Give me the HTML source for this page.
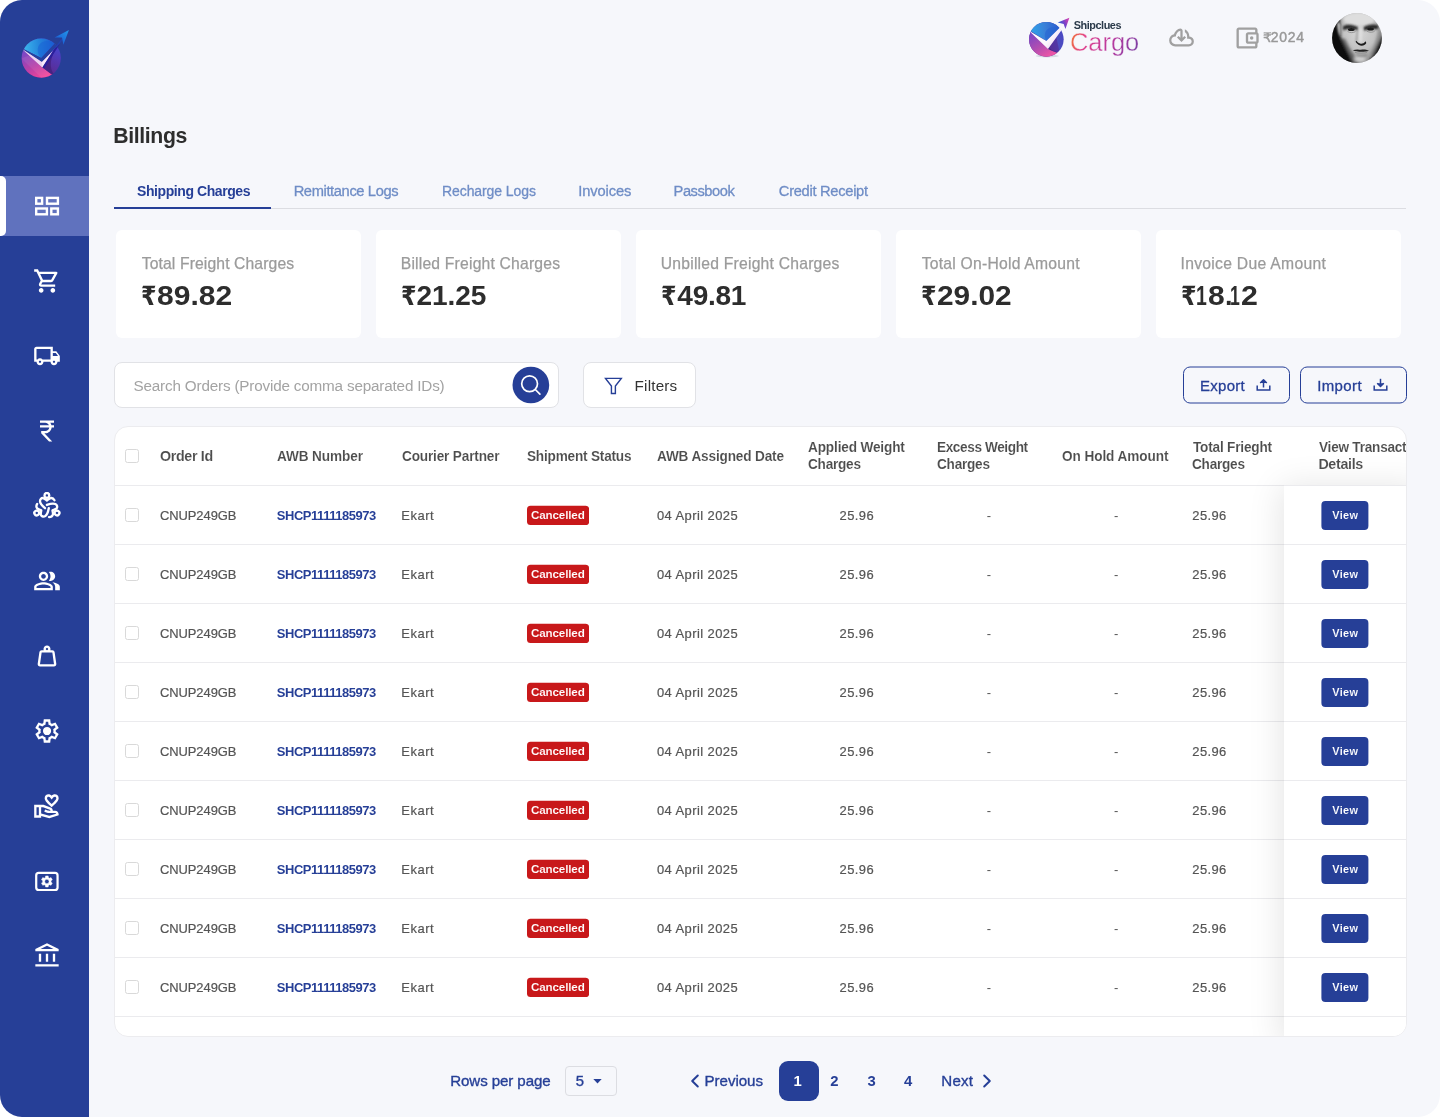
<!DOCTYPE html>
<html lang="en"><head><meta charset="utf-8"><title>Billings</title>
<style>
*{box-sizing:border-box}
html,body{margin:0;padding:0;background:#fff}
body{width:1440px;height:1117px;overflow:hidden;font-family:"Liberation Sans","DejaVu Sans",sans-serif}
#app{will-change:transform;position:relative;width:1440px;height:1117px;background:#f6f7fb;border-radius:22px;overflow:hidden}
#side{position:absolute;left:0;top:0;width:89px;height:1117px;background:#263f97}
#act{position:absolute;left:0;top:176px;width:89px;height:60px;background:#6072be}
#actbar{position:absolute;left:0;top:176px;width:6px;height:60px;background:#fff;border-radius:0 5px 5px 0}
.ic{position:absolute;left:33px;width:28px;height:28px;fill:#fff}
.t{position:absolute;white-space:pre;line-height:1}
.card{position:absolute;top:230px;width:245px;height:108px;background:#fff;border-radius:6px}
.abs{position:absolute}
#tabline{position:absolute;left:114px;top:208px;width:1292px;height:1px;background:#dcdde2}
#tabact{position:absolute;left:114px;top:207px;width:157px;height:2px;background:#263f97}
#search{position:absolute;left:114px;top:362px;width:445px;height:46px;background:#fff;border:1px solid #e1e2e6;border-radius:8px}
#sbtn{position:absolute;left:512.5px;top:366.7px;width:36.6px;height:36.6px;border-radius:50%;background:#263f97}
#filt{position:absolute;left:583px;top:362px;width:113px;height:46px;background:#fff;border:1px solid #e1e2e6;border-radius:8px}
.obtn{position:absolute;top:366.5px;width:107px;height:37px;border:1px solid #263f97;border-radius:7px}
#tbl{position:absolute;left:114px;top:426px;width:1293px;height:611px;background:#fff;border:1px solid #ececef;border-radius:14px;overflow:hidden}
.rl{position:absolute;left:0;width:1293px;height:1px;background:#ebebee}
.cb{position:absolute;left:125px;width:14px;height:14px;border:1px solid #d9d9d9;border-radius:2.5px;background:#fff}
.badge{position:absolute;left:527px;width:62px;height:19.4px;border-radius:3.5px;background:#c8181a}
.vbtn{position:absolute;left:1321.6px;width:47px;height:29px;border-radius:4px;background:#263f97}
#sel{position:absolute;left:565px;top:1066px;width:52px;height:30px;border:1px solid #dcdde2;border-radius:4px}
#pg1{position:absolute;left:779px;top:1061px;width:40px;height:40px;border-radius:9px;background:#263f97}
.clipr{clip-path:inset(-5px 0 -5px 0)}
</style></head>
<body><div id="app">
<div id="side"></div><div id="act"></div><div id="actbar"></div>
<svg class="ic" style="top:192.3px" viewBox="0 0 28 28" ><rect x="3.20" y="5.90" width="5.90" height="5.80" fill="none" stroke="#fff" stroke-width="2.4"/><rect x="14.00" y="5.90" width="10.90" height="5.80" fill="none" stroke="#fff" stroke-width="2.4"/><rect x="3.20" y="16.50" width="10.70" height="5.80" fill="none" stroke="#fff" stroke-width="2.4"/><rect x="18.30" y="16.50" width="6.60" height="5.80" fill="none" stroke="#fff" stroke-width="2.4"/></svg>
<svg class="ic" style="top:267.3px" viewBox="0 -960 960 960" ><path d="M280-80q-33 0-56.500-23.500T200-160q0-33 23.500-56.500T280-240q33 0 56.500 23.500T360-160q0 33-23.500 56.500T280-80Zm400 0q-33 0-56.500-23.500T600-160q0-33 23.500-56.500T680-240q33 0 56.500 23.500T760-160q0 33-23.500 56.500T680-80ZM246-720l96 200h280l110-200H246Zm-38-80h590q23 0 35 20.500t1 41.500L692-482q-11 20-29.500 31T622-440H324l-44 80h480v80H280q-45 0-68-39.500t-2-78.500l54-98-144-304H40v-80h130l38 80Z"/></svg>
<svg class="ic" style="top:342.3px" viewBox="0 0 24 24" ><path d="M20 8h-3V4H3c-1.100 0-2 .9-2 2v11h2c0 1.660 1.340 3 3 3s3-1.340 3-3h6c0 1.660 1.340 3 3 3s3-1.340 3-3h2v-5l-3-4zm-.5 1.500l1.960 2.500H17V9.500h2.500zM6 18c-.55 0-1-.45-1-1s.45-1 1-1 1 .45 1 1-.45 1-1 1zm2.220-3c-.55-.61-1.330-1-2.220-1s-1.670.39-2.220 1H3V6h12v9H8.220zM18 18c-.55 0-1-.45-1-1s.45-1 1-1 1 .45 1 1-.45 1-1 1z"/></svg>
<svg class="ic" style="top:417.3px" viewBox="0 0 24 24" ><path d="M13.660 7c-.56-1.180-1.760-2-3.160-2H6V3h12v2h-3.260c.48.580.84 1.260 1.050 2H18v2h-2.020c-.25 2.800-2.610 5-5.480 5h-.73l6.730 7h-2.770L7 14v-2h3.500c1.760 0 3.220-1.300 3.460-3H6V7h7.660z"/></svg>
<svg class="ic" style="top:492.3px" viewBox="0 0 24 24" ><g transform="translate(0 -0.3)" fill="none" stroke="#fff" stroke-width="2" stroke-linecap="round" stroke-linejoin="round"><circle cx="11.9" cy="3.2" r="2.050"/><path d="M18.400 7.400C17.600 5.900 16.400 5.300 15.200 5.500 13.900 5.700 13 6.900 11.900 7.700 10.800 6.900 9.900 5.700 8.600 5.500 7 5.300 5.900 6.700 6 8.300 6.200 10.500 8.300 12.500 10.300 14.200"/><g transform="rotate(120 11.9 13.25)"><circle cx="11.9" cy="3.2" r="2.050"/><path d="M18.400 7.400C17.600 5.900 16.400 5.300 15.200 5.500 13.900 5.700 13 6.900 11.900 7.700 10.800 6.900 9.900 5.700 8.600 5.500 7 5.300 5.900 6.700 6 8.300 6.200 10.500 8.300 12.500 10.300 14.200"/></g><g transform="rotate(240 11.9 13.25)"><circle cx="11.9" cy="3.2" r="2.050"/><path d="M18.400 7.400C17.600 5.900 16.400 5.300 15.200 5.500 13.900 5.700 13 6.900 11.900 7.700 10.800 6.900 9.900 5.700 8.600 5.500 7 5.300 5.900 6.700 6 8.300 6.200 10.500 8.300 12.500 10.300 14.200"/></g></g></svg>
<svg class="ic" style="top:567.3px" viewBox="0 0 24 24" ><path d="M16.670 13.130C18.040 14.060 19 15.320 19 17v3h4v-3c0-2.180-3.570-3.470-6.330-3.870zM15 12c2.210 0 4-1.790 4-4s-1.790-4-4-4c-.47 0-.91.100-1.330.24C14.500 5.270 15 6.580 15 8s-.5 2.730-1.330 3.760c.42.140.86.240 1.330.240zM9 12c2.210 0 4-1.790 4-4s-1.790-4-4-4-4 1.790-4 4 1.790 4 4 4zm0-6c1.100 0 2 .9 2 2s-.9 2-2 2-2-.9-2-2 .9-2 2-2zm0 7c-2.670 0-8 1.340-8 4v3h16v-3c0-2.660-5.330-4-8-4zm6 5H3v-.99C3.200 16.290 6.300 15 9 15s5.800 1.290 6 2v1z"/></svg>
<svg class="ic" style="top:642.3px" viewBox="0 -960 960 960" ><path d="M240-200h480l-57-400H297l-57 400Zm240-480q17 0 28.500-11.500T520-720q0-17-11.500-28.500T480-760q-17 0-28.500 11.500T440-720q0 17 11.500 28.500T480-680Zm113 0h70q30 0 52 20t27 49l57 400q5 36-18.500 63.500T720-120H240q-37 0-60.500-27.500T161-211l57-400q5-29 27-49t52-20h70q-3-10-5-19.500t-2-20.500q0-50 35-85t85-35q50 0 85 35t35 85q0 11-2 20.500t-5 19.500Z"/></svg>
<svg class="ic" style="top:717.3px" viewBox="0 -960 960 960" ><path d="m370-80-16-128q-13-5-24.500-12T307-235l-119 50L78-375l103-78q-1-7-1-13.500v-27q0-6.500 1-13.500L78-585l110-190 119 50q11-8 23-15t24-12l16-128h220l16 128q13 5 24.500 12t22.500 15l119-50 110 190-103 78q1 7 1 13.500v27q0 6.500-2 13.500l103 78-110 190-118-50q-11 8-23 15t-24 12L590-80H370Zm70-80h79l14-106q31-8 57.500-23.500T639-327l99 41 39-68-86-65q5-14 7-29.500t2-31.500q0-16-2-31.500t-7-29.500l86-65-39-68-99 42q-22-23-48.500-38.500T533-694l-13-106h-79l-14 106q-31 8-57.500 23.500T321-633l-99-41-39 68 86 64q-5 15-7 30t-2 32q0 16 2 31t7 30l-86 65 39 68 99-42q22 23 48.500 38.500T427-266l13 106Zm42-180q58 0 99-41t41-99q0-58-41-99t-99-41q-59 0-99.500 41T342-480q0 58 40.500 99t99.500 41Z"/></svg>
<svg class="ic" style="top:792.3px" viewBox="0 0 24 24" ><path d="M16 13c3.090-2.810 6-5.440 6-7.700C22 3.450 20.550 2 18.700 2c-1.040 0-2.050.49-2.700 1.250C15.340 2.490 14.340 2 13.300 2 11.450 2 10 3.450 10 5.300c0 2.260 2.910 4.890 6 7.700zm-2.700-9c.44 0 .89.210 1.180.55L16 6.340l1.520-1.790c.29-.34.740-.55 1.180-.55.740 0 1.300.56 1.300 1.300 0 1.120-2.040 3.170-4 4.990-1.960-1.820-4-3.880-4-4.990 0-.74.56-1.300 1.300-1.300zM19 16h-2c0-1.200-.75-2.280-1.870-2.700L8.970 11H1v11h6v-1.440l7 1.940 8-2.500v-1c0-1.660-1.340-3-3-3zM3 20v-7h2v7H3zm10.970.41L7 18.480V13h1.610l5.820 2.170c.34.130.57.460.57.830 0 0-1.990-.05-2.300-.15l-2.380-.79-.63 1.900 2.380.79c.51.170 1.040.26 1.580.26H19c.39 0 .74.230.9.560l-5.930 1.840z"/></svg>
<svg class="ic" style="top:867.3px" viewBox="0 0 24 24" ><rect x="2.750" y="5.050" width="18.300" height="14.650" rx="2.200" fill="none" stroke="#fff" stroke-width="1.9"/><path fill-rule="evenodd" d="M10.63 9.03 L10.79 7.68 L13.01 7.68 L13.17 9.03 L14.18 9.62 L15.44 9.08 L16.54 11.00 L15.45 11.81 L15.45 12.99 L16.54 13.80 L15.44 15.72 L14.18 15.18 L13.17 15.77 L13.01 17.12 L10.79 17.12 L10.63 15.77 L9.62 15.18 L8.36 15.72 L7.26 13.80 L8.35 12.99 L8.35 11.81 L7.26 11.00 L8.36 9.08 L9.62 9.62Z M10.00 12.40a1.9 1.9 0 1 0 3.8 0a1.9 1.9 0 1 0 -3.8 0Z" stroke="#fff" stroke-width="0.400" stroke-linejoin="round"/></svg>
<svg class="ic" style="top:942.3px" viewBox="0 -960 960 960" ><path d="M200-280v-280h80v280h-80Zm240 0v-280h80v280h-80ZM80-120v-80h800v80H80Zm600-160v-280h80v280h-80ZM80-640v-80l400-200 400 200v80H80Zm178-80h444L480-830 258-720Z"/></svg>
<svg class="abs" style="left:16px;top:24px" width="60" height="60" viewBox="0 0 1117 1117"><defs>
<clipPath id="L1c"><circle cx="470" cy="635" r="365"/></clipPath>
<linearGradient id="L1p" gradientUnits="userSpaceOnUse" x1="200" y1="500" x2="480" y2="1000"><stop offset="0" stop-color="#7a48c6"/><stop offset=".55" stop-color="#b840a8"/><stop offset="1" stop-color="#f0459a"/></linearGradient>
<linearGradient id="L1b" gradientUnits="userSpaceOnUse" x1="150" y1="450" x2="720" y2="420"><stop offset="0" stop-color="#3bb4ec"/><stop offset=".5" stop-color="#2486dc"/><stop offset="1" stop-color="#1c58cf"/></linearGradient>
<linearGradient id="L1r" gradientUnits="userSpaceOnUse" x1="560" y1="900" x2="800" y2="450"><stop offset="0" stop-color="#5a2a8e"/><stop offset=".6" stop-color="#5238b4"/><stop offset="1" stop-color="#4644cc"/></linearGradient>
<linearGradient id="L1a" gradientUnits="userSpaceOnUse" x1="980" y1="120" x2="760" y2="360"><stop offset="0" stop-color="#2298ea"/><stop offset="1" stop-color="#1a55d2"/></linearGradient>
</defs>
<g clip-path="url(#L1c)">
<rect x="0" y="0" width="1117" height="1117" fill="url(#L1r)"/>
<path d="M0 300L492 808C550 850 600 890 690 950L690 1117L0 1117Z" fill="url(#L1p)"/>
<path d="M100 640L520 1050L700 1000L300 560Z" fill="#fff" opacity=".07"/>
<path d="M492 808L760 420C640 640 600 800 720 960L690 960C600 890 550 850 492 808Z" fill="#42207c" opacity=".75"/>
<path d="M60 425L470 635L780 300L780 0L0 0Z" fill="url(#L1b)"/>
<path d="M470 635C380 560 380 400 480 340C560 300 680 310 740 350Z" fill="#1a63d6" opacity=".55"/>
<path d="M60 425L470 635L760 320L830 330L480 708L100 470Z" fill="#2441a0"/>
<path d="M120 470L480 708L690 500L492 812Z" fill="#f7eafa"/>
<path d="M120 470L480 708L492 812Z" fill="#e6bfe9" opacity=".55"/>
</g>
<path d="M492 812L690 500L790 365L810 380L530 826Z" fill="#2b1f9c"/>
<path d="M700 470L850 270L880 285L770 420Z" fill="#2343ae"/>
<path d="M985 112L718 252L856 250L882 388Z" fill="url(#L1a)"/></svg>
<svg class="abs" style="left:1024px;top:10px" width="52" height="52" viewBox="0 0 1117 1117"><defs>
<clipPath id="L2c"><circle cx="480" cy="630" r="372"/></clipPath>
<linearGradient id="L2p" gradientUnits="userSpaceOnUse" x1="200" y1="500" x2="520" y2="1000"><stop offset="0" stop-color="#7d47c4"/><stop offset=".55" stop-color="#b44eb0"/><stop offset="1" stop-color="#ec55a6"/></linearGradient>
<linearGradient id="L2b" gradientUnits="userSpaceOnUse" x1="170" y1="450" x2="740" y2="420"><stop offset="0" stop-color="#2fa0e8"/><stop offset=".5" stop-color="#3a80d8"/><stop offset="1" stop-color="#2a5ecf"/></linearGradient>
<linearGradient id="L2r" gradientUnits="userSpaceOnUse" x1="560" y1="720" x2="840" y2="660"><stop offset="0" stop-color="#55309a"/><stop offset=".52" stop-color="#5336a6"/><stop offset=".6" stop-color="#4d4ec0"/><stop offset="1" stop-color="#4a48c2"/></linearGradient>
<linearGradient id="L2a" gradientUnits="userSpaceOnUse" x1="740" y1="280" x2="960" y2="180"><stop offset="0" stop-color="#2f62d4"/><stop offset=".5" stop-color="#7a40c8"/><stop offset=".9" stop-color="#c840b4"/></linearGradient>
<linearGradient id="L2w" gradientUnits="userSpaceOnUse" x1="300" y1="500" x2="650" y2="800"><stop offset="0" stop-color="#ffffff"/><stop offset=".6" stop-color="#fbf6fd"/><stop offset="1" stop-color="#f0d6f2"/></linearGradient>
<filter id="L2s" x="-20%" y="-20%" width="140%" height="140%"><feGaussianBlur stdDeviation="14"/></filter>
</defs>
<ellipse cx="500" cy="990" rx="250" ry="30" fill="#50607a" opacity=".18" filter="url(#L2s)"/>
<g clip-path="url(#L2c)">
<rect x="0" y="0" width="1117" height="1117" fill="url(#L2r)"/>
<path d="M0 300L515 835C580 870 640 900 730 925L730 1117L0 1117Z" fill="url(#L2p)"/>
<path d="M515 835C580 870 640 900 730 925L700 900C620 880 570 860 540 800Z" fill="#3a1f70" opacity=".6"/>
<path d="M60 400L480 665L800 350L800 0L0 0Z" fill="url(#L2b)"/>
<path d="M480 665C420 560 440 420 560 380C640 360 710 370 770 390Z" fill="#2562d2" opacity=".55"/>
<path d="M100 440L480 665L800 350L860 360L515 838Z" fill="url(#L2w)"/>
</g>
<path d="M755 395L850 300L870 330L790 432Z" fill="#fbf6fd"/>
<path d="M975 165L725 268L852 300L890 410Z" fill="url(#L2a)"/></svg>
<svg class="abs" style="left:1066px;top:28px" width="80" height="32" viewBox="0 0 80 32"><defs><linearGradient id="cg" gradientUnits="userSpaceOnUse" x1="4" y1="4" x2="72" y2="26"><stop offset="0" stop-color="#f47b2a"/><stop offset=".22" stop-color="#e2418c"/><stop offset=".6" stop-color="#b9399f"/><stop offset="1" stop-color="#7b3fa4"/></linearGradient></defs>
<text x="3.900" y="23.100" font-family="Liberation Sans, sans-serif" font-size="25.600" fill="url(#cg)" stroke="#f6f7fb" stroke-width="0.350" textLength="69.300" lengthAdjust="spacingAndGlyphs">Cargo</text></svg>
<svg class="abs" style="left:1168.3px;top:24.3px" width="27" height="27" viewBox="0 -960 960 960" fill="#a0a0a0"><path d="M260-160q-91 0-155.500-63T40-377q0-78 47-139t123-78q17-72 85-137t145-65q33 0 56.500 23.500T520-716v242l64-62 56 56-160 160-160-160 56-56 64 62v-242q-76 14-118 73.500T280-520h-20q-58 0-99 41t-41 99q0 58 41 99t99 41h480q42 0 71-29t29-71q0-42-29-71t-71-29h-60v-80q0-48-22-89.500T600-680v-93q74 35 117 103.500T760-520q69 8 114.500 59.500T920-340q0 75-52.500 127.500T740-160H260Z"/></svg>
<svg class="abs" style="left:1232.600px;top:23.85px" width="28" height="28" viewBox="0 0 24 24" fill="#a0a0a0"><path d="M21 7.280V5c0-1.100-.9-2-2-2H5c-1.110 0-2 .9-2 2v14c0 1.100.89 2 2 2h14c1.100 0 2-.9 2-2v-2.280c.59-.35 1-.98 1-1.720V9c0-.74-.41-1.370-1-1.720zM20 9v6h-7V9h7zM5 19V5h14v2h-6c-1.100 0-2 .9-2 2v6c0 1.100.9 2 2 2h6v2H5z"/><circle cx="16" cy="12" r="1.500"/></svg>
<svg class="abs" style="left:1331.8px;top:12.9px" width="50" height="50" viewBox="0 0 50 50">
<defs><clipPath id="avc"><circle cx="25" cy="25" r="24.900"/></clipPath>
<filter id="avb" x="-30%" y="-30%" width="160%" height="160%"><feGaussianBlur stdDeviation="1.500"/></filter>
<filter id="avm" x="-30%" y="-30%" width="160%" height="160%"><feGaussianBlur stdDeviation="0.800"/></filter>
<filter id="avs" x="-30%" y="-30%" width="160%" height="160%"><feGaussianBlur stdDeviation="0.450"/></filter>
<radialGradient id="avg" gradientUnits="userSpaceOnUse" cx="27" cy="20" r="30"><stop offset="0" stop-color="#d6d6d6"/><stop offset=".55" stop-color="#c2c2c2"/><stop offset="1" stop-color="#8c8c8c"/></radialGradient></defs>
<g clip-path="url(#avc)">
<rect width="50" height="50" fill="url(#avg)"/>
<g filter="url(#avb)">
<ellipse cx="27" cy="6" rx="16" ry="7" fill="#dedede"/>
<path d="M-4 -4L10 -4C7.500 3 8 8 8.400 12L8.700 25C12 30 16 40 22 52L-4 52Z" fill="#070707"/>
<path d="M8.700 25C12 30 16 40 22 52L28 52C22 44 17 34 13 26Z" fill="#4a4a4a" opacity=".8"/>
<path d="M54 14C50 22 47 30 43 38C41 43 38 47 34 52L54 52Z" fill="#161616"/>
<path d="M47 16C45 26 42 34 38 42L42 42C45 34 48 26 50 18Z" fill="#6a6a6a" opacity=".6"/>
<ellipse cx="28" cy="46" rx="6" ry="3" fill="#cfcfcf"/>
</g>
<g filter="url(#avm)">
<path d="M5.200 9.500C6.500 9 8 9.500 8.300 12L8.500 24C6.500 21 5 16 5.200 9.500Z" fill="#cdcdcd"/>
<path d="M10.800 13.500C15 10.800 21 11.500 26 14.200L25.800 17.600C21 15.600 15 15.600 11.200 17.200Z" fill="#272727"/>
<path d="M31.500 14.200C36 11.300 42 10.800 46.500 12.500L46 16.400C42 15.600 36 16 31.800 17.800Z" fill="#272727"/>
<path d="M29 15C28.800 20 28.500 25 28.800 29" stroke="#e2e2e2" stroke-width="2.200" fill="none"/>
<path d="M25.500 17C25 22 24.800 26 24.200 28.800" stroke="#8e8e8e" stroke-width="1.300" fill="none"/>
<path d="M24.700 41.200C27.500 42.600 32 42.600 35 41.200L34.500 42.600C32 43.600 27.500 43.600 25.200 42.600Z" fill="#6e6e6e"/>
</g>
<g filter="url(#avs)">
<path d="M23.600 28.800C25.300 31.200 27.500 32.800 29.700 32.800C31.800 32.800 33.300 31.800 34.300 30L33.600 28.300C32.300 30.300 30.300 30.900 28.700 30.700C27 30.500 25.500 29.600 24.500 27.800Z" fill="#1c1c1c"/>
<ellipse cx="19.300" cy="16.600" rx="3.300" ry="1.500" fill="#1a1a1a"/>
<ellipse cx="38.600" cy="16.100" rx="3.300" ry="1.500" fill="#1a1a1a"/>
<path d="M15.500 18.500C18 20 21.500 20 23.500 18.600" stroke="#8a8a8a" stroke-width=".8" fill="none"/>
<path d="M35 18.300C37.500 19.700 41 19.600 42.800 18" stroke="#8a8a8a" stroke-width=".8" fill="none"/>
<path d="M20.800 37.300C24 35.900 27 36.400 28.800 36.800C31 36.300 34 36.200 37 37.700C33 39.200 25 39.200 20.800 37.300Z" fill="#242424"/>
<path d="M23 39.500C26 40.300 32 40.300 35 39.500" stroke="#8a8a8a" stroke-width=".9" fill="none"/>
</g>
</g></svg>
<div id="tabline"></div><div id="tabact"></div>
<div class="card" style="left:116px"></div>
<div class="card" style="left:376px"></div>
<div class="card" style="left:636px"></div>
<div class="card" style="left:896px"></div>
<div class="card" style="left:1156px"></div>
<div id="search"></div>
<svg class="abs" style="left:510px;top:364px" width="42" height="42" viewBox="0 0 42 42"><circle cx="20.850" cy="21" r="18.350" fill="#263f97"/></svg>
<svg class="abs" style="left:520px;top:374px" width="22" height="22" viewBox="0 0 22 22" fill="none" stroke="#fff" stroke-width="1.7" stroke-linecap="round"><circle cx="9.600" cy="9.750" r="7.900"/><path d="M15.300 15.500l4.600 4.600"/></svg>
<div id="filt"></div>
<svg class="abs" style="left:603px;top:376px" width="22" height="22" viewBox="0 0 22 22" fill="none" stroke="#263f97" stroke-width="1.5" stroke-linejoin="miter"><path transform="translate(1 .9) scale(.94)" d="M1.6 1.6h16.8l-6.3 8.2v7.9H7.9V9.8z"/></svg>
<svg class="abs" style="left:1182px;top:365px" width="110" height="40" viewBox="0 0 110 40"><rect x="1.500" y="2" width="106" height="36" rx="6.500" fill="none" stroke="#263f97" stroke-width="1"/></svg>
<svg class="abs" style="left:1299px;top:365px" width="110" height="40" viewBox="0 0 110 40"><rect x="1.500" y="2" width="106" height="36" rx="6.500" fill="none" stroke="#263f97" stroke-width="1"/></svg>
<svg class="abs" style="left:1256px;top:378px" width="15" height="14" viewBox="0 0 15 14" fill="none" stroke="#263f97" stroke-width="1.500"><path d="M1.2 7.5v4.6h12.6V7.5"/><path d="M7.5 9.5V2.2" /><path d="M4.2 5l3.3-3.3L10.800 5" fill="#263f97" stroke-linejoin="round"/></svg>
<svg class="abs" style="left:1373px;top:378px" width="15" height="14" viewBox="0 0 15 14" fill="none" stroke="#263f97" stroke-width="1.500"><path d="M1.2 7.5v4.6h12.6V7.5"/><path d="M7.5 0.800V8" /><path d="M4.2 5.2l3.3 3.3 3.300-3.300" fill="#263f97" stroke-linejoin="round"/></svg>
<div id="tbl">
<div class="rl" style="top:58px"></div>
<div class="rl" style="top:117px"></div>
<div class="rl" style="top:176px"></div>
<div class="rl" style="top:235px"></div>
<div class="rl" style="top:294px"></div>
<div class="rl" style="top:353px"></div>
<div class="rl" style="top:412px"></div>
<div class="rl" style="top:471px"></div>
<div class="rl" style="top:530px"></div>
<div class="rl" style="top:589px"></div>
<div class="abs" style="left:1169px;top:59px;width:140px;height:560px;background:#fff;box-shadow:-3px 0 32px rgba(0,0,0,.105)"></div>
<div class="rl" style="top:58px;left:1169px;width:123px"></div>
<div class="rl" style="top:117px;left:1169px;width:123px"></div>
<div class="rl" style="top:176px;left:1169px;width:123px"></div>
<div class="rl" style="top:235px;left:1169px;width:123px"></div>
<div class="rl" style="top:294px;left:1169px;width:123px"></div>
<div class="rl" style="top:353px;left:1169px;width:123px"></div>
<div class="rl" style="top:412px;left:1169px;width:123px"></div>
<div class="rl" style="top:471px;left:1169px;width:123px"></div>
<div class="rl" style="top:530px;left:1169px;width:123px"></div>
<div class="rl" style="top:589px;left:1169px;width:123px"></div>
</div>
<div class="cb" style="top:449px"></div>
<div class="cb" style="top:508px"></div><svg class="abs" style="left:527px;top:505px" width="62" height="21" viewBox="0 0 62 21"><rect x="0" y=".75" width="62.050" height="19.350" rx="3.500" fill="#c8181a"/></svg><svg class="abs" style="left:1321px;top:500px" width="48" height="31" viewBox="0 0 48 31"><rect x=".4" y="1" width="47" height="29" rx="4" fill="#263f97"/></svg>
<div class="cb" style="top:567px"></div><svg class="abs" style="left:527px;top:564px" width="62" height="21" viewBox="0 0 62 21"><rect x="0" y=".75" width="62.050" height="19.350" rx="3.500" fill="#c8181a"/></svg><svg class="abs" style="left:1321px;top:559px" width="48" height="31" viewBox="0 0 48 31"><rect x=".4" y="1" width="47" height="29" rx="4" fill="#263f97"/></svg>
<div class="cb" style="top:626px"></div><svg class="abs" style="left:527px;top:623px" width="62" height="21" viewBox="0 0 62 21"><rect x="0" y=".75" width="62.050" height="19.350" rx="3.500" fill="#c8181a"/></svg><svg class="abs" style="left:1321px;top:618px" width="48" height="31" viewBox="0 0 48 31"><rect x=".4" y="1" width="47" height="29" rx="4" fill="#263f97"/></svg>
<div class="cb" style="top:685px"></div><svg class="abs" style="left:527px;top:682px" width="62" height="21" viewBox="0 0 62 21"><rect x="0" y=".75" width="62.050" height="19.350" rx="3.500" fill="#c8181a"/></svg><svg class="abs" style="left:1321px;top:677px" width="48" height="31" viewBox="0 0 48 31"><rect x=".4" y="1" width="47" height="29" rx="4" fill="#263f97"/></svg>
<div class="cb" style="top:744px"></div><svg class="abs" style="left:527px;top:741px" width="62" height="21" viewBox="0 0 62 21"><rect x="0" y=".75" width="62.050" height="19.350" rx="3.500" fill="#c8181a"/></svg><svg class="abs" style="left:1321px;top:736px" width="48" height="31" viewBox="0 0 48 31"><rect x=".4" y="1" width="47" height="29" rx="4" fill="#263f97"/></svg>
<div class="cb" style="top:803px"></div><svg class="abs" style="left:527px;top:800px" width="62" height="21" viewBox="0 0 62 21"><rect x="0" y=".75" width="62.050" height="19.350" rx="3.500" fill="#c8181a"/></svg><svg class="abs" style="left:1321px;top:795px" width="48" height="31" viewBox="0 0 48 31"><rect x=".4" y="1" width="47" height="29" rx="4" fill="#263f97"/></svg>
<div class="cb" style="top:862px"></div><svg class="abs" style="left:527px;top:859px" width="62" height="21" viewBox="0 0 62 21"><rect x="0" y=".75" width="62.050" height="19.350" rx="3.500" fill="#c8181a"/></svg><svg class="abs" style="left:1321px;top:854px" width="48" height="31" viewBox="0 0 48 31"><rect x=".4" y="1" width="47" height="29" rx="4" fill="#263f97"/></svg>
<div class="cb" style="top:921px"></div><svg class="abs" style="left:527px;top:918px" width="62" height="21" viewBox="0 0 62 21"><rect x="0" y=".75" width="62.050" height="19.350" rx="3.500" fill="#c8181a"/></svg><svg class="abs" style="left:1321px;top:913px" width="48" height="31" viewBox="0 0 48 31"><rect x=".4" y="1" width="47" height="29" rx="4" fill="#263f97"/></svg>
<div class="cb" style="top:980px"></div><svg class="abs" style="left:527px;top:977px" width="62" height="21" viewBox="0 0 62 21"><rect x="0" y=".75" width="62.050" height="19.350" rx="3.500" fill="#c8181a"/></svg><svg class="abs" style="left:1321px;top:972px" width="48" height="31" viewBox="0 0 48 31"><rect x=".4" y="1" width="47" height="29" rx="4" fill="#263f97"/></svg>
<div id="sel"></div><div id="pg1"></div>
<svg class="abs" style="left:593px;top:1079px" width="9" height="5" viewBox="0 0 9 5"><path d="M0.300 0h8.400L4.500 4.600z" fill="#263f97"/></svg>
<svg class="abs" style="left:689px;top:1073px" width="12" height="16" viewBox="0 0 12 16" fill="none" stroke="#263f97" stroke-width="2" stroke-linecap="round" stroke-linejoin="round"><path d="M8.800 2.500L3.200 8l5.600 5.500"/></svg>
<svg class="abs" style="left:980.5px;top:1073px" width="12" height="16" viewBox="0 0 12 16" fill="none" stroke="#263f97" stroke-width="2" stroke-linecap="round" stroke-linejoin="round"><path d="M3.200 2.500L8.800 8l-5.600 5.500"/></svg>
<span class="t" style="left:113.35px;top:125.00px;font-size:21.22px;color:#2d2d2d;font-weight:700;letter-spacing:-0.386px;">Billings</span>
<span class="t" style="left:137.32px;top:184.00px;font-size:14.68px;color:#263f97;font-weight:700;letter-spacing:-0.447px;transform:scaleX(0.955);transform-origin:0 0;">Shipping Charges</span>
<span class="t" style="left:293.65px;top:184.00px;font-size:14.68px;color:#6f8dc6;-webkit-text-stroke:0.3px #6f8dc6;letter-spacing:-0.368px;">Remittance Logs</span>
<span class="t" style="left:441.61px;top:184.00px;font-size:14.68px;color:#6f8dc6;-webkit-text-stroke:0.3px #6f8dc6;letter-spacing:-0.100px;transform:scaleX(0.955);transform-origin:0 0;">Recharge Logs</span>
<span class="t" style="left:578.35px;top:184.00px;font-size:14.68px;color:#6f8dc6;-webkit-text-stroke:0.3px #6f8dc6;letter-spacing:-0.129px;">Invoices</span>
<span class="t" style="left:673.55px;top:184.00px;font-size:14.68px;color:#6f8dc6;-webkit-text-stroke:0.3px #6f8dc6;letter-spacing:-0.450px;">Passbook</span>
<span class="t" style="left:778.85px;top:184.00px;font-size:14.68px;color:#6f8dc6;-webkit-text-stroke:0.3px #6f8dc6;letter-spacing:-0.288px;">Credit Receipt</span>
<span class="t" style="left:141.75px;top:256.00px;font-size:15.7px;color:#9b9b9b;-webkit-text-stroke:0.25px #9b9b9b;letter-spacing:0.118px;">Total Freight Charges</span>
<span class="t" style="left:140.95px;top:283.00px;font-size:26.5px;color:#2d2d2d;font-weight:700;font-family:'DejaVu Sans', 'Liberation Sans', sans-serif;transform:scaleX(0.838);transform-origin:0 0;">₹</span>
<span class="t" style="left:156.80px;top:282.00px;font-size:28.05px;color:#2d2d2d;font-weight:700;transform:scaleX(1.070);transform-origin:0 0;">89.82</span>
<span class="t" style="left:400.75px;top:256.00px;font-size:15.7px;color:#9b9b9b;-webkit-text-stroke:0.25px #9b9b9b;letter-spacing:0.195px;">Billed Freight Charges</span>
<span class="t" style="left:400.95px;top:283.00px;font-size:26.5px;color:#2d2d2d;font-weight:700;font-family:'DejaVu Sans', 'Liberation Sans', sans-serif;transform:scaleX(0.837);transform-origin:0 0;">₹</span>
<span class="t" style="left:416.60px;top:282.00px;font-size:28.05px;color:#2d2d2d;font-weight:700;letter-spacing:-0.125px;">21.25</span>
<span class="t" style="left:660.75px;top:256.00px;font-size:15.7px;color:#9b9b9b;-webkit-text-stroke:0.25px #9b9b9b;letter-spacing:0.220px;">Unbilled Freight Charges</span>
<span class="t" style="left:660.95px;top:283.00px;font-size:26.5px;color:#2d2d2d;font-weight:700;font-family:'DejaVu Sans', 'Liberation Sans', sans-serif;transform:scaleX(0.837);transform-origin:0 0;">₹</span>
<span class="t" style="left:677.35px;top:282.00px;font-size:28.05px;color:#2d2d2d;font-weight:700;letter-spacing:-0.312px;">49.81</span>
<span class="t" style="left:921.75px;top:256.00px;font-size:15.7px;color:#9b9b9b;-webkit-text-stroke:0.25px #9b9b9b;letter-spacing:0.229px;">Total On-Hold Amount</span>
<span class="t" style="left:920.95px;top:283.00px;font-size:26.5px;color:#2d2d2d;font-weight:700;font-family:'DejaVu Sans', 'Liberation Sans', sans-serif;transform:scaleX(0.837);transform-origin:0 0;">₹</span>
<span class="t" style="left:936.54px;top:282.00px;font-size:28.05px;color:#2d2d2d;font-weight:700;transform:scaleX(1.063);transform-origin:0 0;">29.02</span>
<span class="t" style="left:1180.50px;top:256.00px;font-size:15.7px;color:#9b9b9b;-webkit-text-stroke:0.25px #9b9b9b;letter-spacing:0.288px;">Invoice Due Amount</span>
<span class="t" style="left:1180.95px;top:283.00px;font-size:26.5px;color:#2d2d2d;font-weight:700;font-family:'DejaVu Sans', 'Liberation Sans', sans-serif;transform:scaleX(0.838);transform-origin:0 0;">₹</span>
<span class="t" style="left:1196.28px;top:282.00px;font-size:28.05px;color:#2d2d2d;font-weight:700;transform:scaleX(0.694);transform-origin:0 0;">1</span>
<span class="t" style="left:1208.40px;top:282.00px;font-size:28.05px;color:#2d2d2d;font-weight:700;transform:scaleX(1.071);transform-origin:0 0;">8</span>
<span class="t" style="left:1225.21px;top:282.00px;font-size:28.05px;color:#2d2d2d;font-weight:700;transform:scaleX(0.965);transform-origin:0 0;">.</span>
<span class="t" style="left:1230.15px;top:282.00px;font-size:28.05px;color:#2d2d2d;font-weight:700;transform:scaleX(0.630);transform-origin:0 0;">1</span>
<span class="t" style="left:1241.42px;top:282.00px;font-size:28.05px;color:#2d2d2d;font-weight:700;transform:scaleX(1.081);transform-origin:0 0;">2</span>
<span class="t" style="left:133.50px;top:378.00px;font-size:15.26px;color:#a3a3a3;letter-spacing:-0.179px;">Search Orders (Provide comma separated IDs)</span>
<span class="t" style="left:634.55px;top:378.00px;font-size:15.26px;color:#333;letter-spacing:0.192px;">Filters</span>
<span class="t" style="left:1200.05px;top:379.00px;font-size:14.97px;color:#263f97;-webkit-text-stroke:0.3px #263f97;letter-spacing:0.280px;">Export</span>
<span class="t" style="left:1317.15px;top:379.00px;font-size:14.97px;color:#263f97;-webkit-text-stroke:0.3px #263f97;letter-spacing:0.420px;">Import</span>
<span class="t" style="left:159.90px;top:449.00px;font-size:14.24px;color:#4d4d4d;font-weight:700;-webkit-text-stroke:0.1px #fff;letter-spacing:-0.300px;">Order Id</span>
<span class="t" style="left:276.76px;top:449.00px;font-size:14.24px;color:#4d4d4d;font-weight:700;-webkit-text-stroke:0.1px #fff;letter-spacing:-0.096px;transform:scaleX(0.955);transform-origin:0 0;">AWB Number</span>
<span class="t" style="left:401.77px;top:449.00px;font-size:14.24px;color:#4d4d4d;font-weight:700;-webkit-text-stroke:0.1px #fff;letter-spacing:-0.167px;transform:scaleX(0.955);transform-origin:0 0;">Courier Partner</span>
<span class="t" style="left:526.92px;top:449.00px;font-size:14.24px;color:#4d4d4d;font-weight:700;-webkit-text-stroke:0.1px #fff;letter-spacing:-0.205px;transform:scaleX(0.955);transform-origin:0 0;">Shipment Status</span>
<span class="t" style="left:657.26px;top:449.00px;font-size:14.24px;color:#4d4d4d;font-weight:700;-webkit-text-stroke:0.1px #fff;letter-spacing:-0.156px;transform:scaleX(0.955);transform-origin:0 0;">AWB Assigned Date</span>
<span class="t" style="left:808.06px;top:440.00px;font-size:14.24px;color:#4d4d4d;font-weight:700;-webkit-text-stroke:0.1px #fff;letter-spacing:-0.150px;transform:scaleX(0.955);transform-origin:0 0;">Applied Weight</span>
<span class="t" style="left:807.82px;top:457.00px;font-size:14.24px;color:#4d4d4d;font-weight:700;-webkit-text-stroke:0.1px #fff;letter-spacing:-0.241px;transform:scaleX(0.955);transform-origin:0 0;">Charges</span>
<span class="t" style="left:936.54px;top:440.00px;font-size:14.24px;color:#4d4d4d;font-weight:700;-webkit-text-stroke:0.1px #fff;letter-spacing:-0.400px;transform:scaleX(0.955);transform-origin:0 0;">Excess Weight</span>
<span class="t" style="left:937.02px;top:457.00px;font-size:14.24px;color:#4d4d4d;font-weight:700;-webkit-text-stroke:0.1px #fff;letter-spacing:-0.241px;transform:scaleX(0.955);transform-origin:0 0;">Charges</span>
<span class="t" style="left:1062.02px;top:449.00px;font-size:14.24px;color:#4d4d4d;font-weight:700;-webkit-text-stroke:0.1px #fff;letter-spacing:-0.077px;transform:scaleX(0.955);transform-origin:0 0;">On Hold Amount</span>
<span class="t" style="left:1192.80px;top:440.00px;font-size:14.24px;color:#4d4d4d;font-weight:700;-webkit-text-stroke:0.1px #fff;letter-spacing:-0.199px;transform:scaleX(0.955);transform-origin:0 0;">Total Frieght</span>
<span class="t" style="left:1192.32px;top:457.00px;font-size:14.24px;color:#4d4d4d;font-weight:700;-webkit-text-stroke:0.1px #fff;letter-spacing:-0.241px;transform:scaleX(0.955);transform-origin:0 0;">Charges</span>
<div class="abs" style="left:0;top:0;width:1406px;height:1117px;overflow:hidden"><span class="t" style="left:1319.40px;top:440.00px;font-size:14.24px;color:#4d4d4d;font-weight:700;-webkit-text-stroke:0.1px #fff;letter-spacing:-0.242px;transform:scaleX(0.955);transform-origin:0 0;">View Transaction</span></div>
<span class="t" style="left:1318.40px;top:457.00px;font-size:14.24px;color:#4d4d4d;font-weight:700;-webkit-text-stroke:0.1px #fff;letter-spacing:-0.308px;">Details</span>
<span class="t" style="left:159.90px;top:510.00px;font-size:12.94px;color:#555;-webkit-text-stroke:0.2px #555;letter-spacing:-0.044px;">CNUP249GB</span>
<span class="t" style="left:276.85px;top:510.00px;font-size:12.94px;color:#263f97;font-weight:700;letter-spacing:-0.431px;">SHCP1111185973</span>
<span class="t" style="left:401.25px;top:510.00px;font-size:12.94px;color:#555;-webkit-text-stroke:0.2px #555;letter-spacing:0.562px;">Ekart</span>
<span class="t" style="left:530.90px;top:509.00px;font-size:11.63px;color:#fff;font-weight:700;-webkit-text-stroke:0.1px #c8181a;letter-spacing:-0.131px;">Cancelled</span>
<span class="t" style="left:657.00px;top:510.00px;font-size:12.94px;color:#555;-webkit-text-stroke:0.2px #555;letter-spacing:0.425px;">04 April 2025</span>
<span class="t" style="left:839.50px;top:510.00px;font-size:12.94px;color:#555;-webkit-text-stroke:0.2px #555;letter-spacing:0.450px;">25.96</span>
<span class="t" style="left:1192.30px;top:510.00px;font-size:12.94px;color:#555;-webkit-text-stroke:0.2px #555;letter-spacing:0.400px;">25.96</span>
<span class="t" style="left:986.83px;top:510.00px;font-size:12.94px;color:#555;">-</span>
<span class="t" style="left:1114.12px;top:510.00px;font-size:12.94px;color:#555;">-</span>
<span class="t" style="left:1332.20px;top:510.00px;font-size:10.9px;color:#fff;font-weight:700;-webkit-text-stroke:0.1px #263f97;letter-spacing:0.383px;">View</span>
<span class="t" style="left:159.90px;top:569.00px;font-size:12.94px;color:#555;-webkit-text-stroke:0.2px #555;letter-spacing:-0.044px;">CNUP249GB</span>
<span class="t" style="left:276.85px;top:569.00px;font-size:12.94px;color:#263f97;font-weight:700;letter-spacing:-0.431px;">SHCP1111185973</span>
<span class="t" style="left:401.25px;top:569.00px;font-size:12.94px;color:#555;-webkit-text-stroke:0.2px #555;letter-spacing:0.562px;">Ekart</span>
<span class="t" style="left:530.90px;top:568.00px;font-size:11.63px;color:#fff;font-weight:700;-webkit-text-stroke:0.1px #c8181a;letter-spacing:-0.131px;">Cancelled</span>
<span class="t" style="left:657.00px;top:569.00px;font-size:12.94px;color:#555;-webkit-text-stroke:0.2px #555;letter-spacing:0.425px;">04 April 2025</span>
<span class="t" style="left:839.50px;top:569.00px;font-size:12.94px;color:#555;-webkit-text-stroke:0.2px #555;letter-spacing:0.450px;">25.96</span>
<span class="t" style="left:1192.30px;top:569.00px;font-size:12.94px;color:#555;-webkit-text-stroke:0.2px #555;letter-spacing:0.400px;">25.96</span>
<span class="t" style="left:986.83px;top:569.00px;font-size:12.94px;color:#555;">-</span>
<span class="t" style="left:1114.12px;top:569.00px;font-size:12.94px;color:#555;">-</span>
<span class="t" style="left:1332.20px;top:569.00px;font-size:10.9px;color:#fff;font-weight:700;-webkit-text-stroke:0.1px #263f97;letter-spacing:0.383px;">View</span>
<span class="t" style="left:159.90px;top:628.00px;font-size:12.94px;color:#555;-webkit-text-stroke:0.2px #555;letter-spacing:-0.044px;">CNUP249GB</span>
<span class="t" style="left:276.85px;top:628.00px;font-size:12.94px;color:#263f97;font-weight:700;letter-spacing:-0.431px;">SHCP1111185973</span>
<span class="t" style="left:401.25px;top:628.00px;font-size:12.94px;color:#555;-webkit-text-stroke:0.2px #555;letter-spacing:0.562px;">Ekart</span>
<span class="t" style="left:530.90px;top:627.00px;font-size:11.63px;color:#fff;font-weight:700;-webkit-text-stroke:0.1px #c8181a;letter-spacing:-0.131px;">Cancelled</span>
<span class="t" style="left:657.00px;top:628.00px;font-size:12.94px;color:#555;-webkit-text-stroke:0.2px #555;letter-spacing:0.425px;">04 April 2025</span>
<span class="t" style="left:839.50px;top:628.00px;font-size:12.94px;color:#555;-webkit-text-stroke:0.2px #555;letter-spacing:0.450px;">25.96</span>
<span class="t" style="left:1192.30px;top:628.00px;font-size:12.94px;color:#555;-webkit-text-stroke:0.2px #555;letter-spacing:0.400px;">25.96</span>
<span class="t" style="left:986.83px;top:628.00px;font-size:12.94px;color:#555;">-</span>
<span class="t" style="left:1114.12px;top:628.00px;font-size:12.94px;color:#555;">-</span>
<span class="t" style="left:1332.20px;top:628.00px;font-size:10.9px;color:#fff;font-weight:700;-webkit-text-stroke:0.1px #263f97;letter-spacing:0.383px;">View</span>
<span class="t" style="left:159.90px;top:687.00px;font-size:12.94px;color:#555;-webkit-text-stroke:0.2px #555;letter-spacing:-0.044px;">CNUP249GB</span>
<span class="t" style="left:276.85px;top:687.00px;font-size:12.94px;color:#263f97;font-weight:700;letter-spacing:-0.431px;">SHCP1111185973</span>
<span class="t" style="left:401.25px;top:687.00px;font-size:12.94px;color:#555;-webkit-text-stroke:0.2px #555;letter-spacing:0.562px;">Ekart</span>
<span class="t" style="left:530.90px;top:686.00px;font-size:11.63px;color:#fff;font-weight:700;-webkit-text-stroke:0.1px #c8181a;letter-spacing:-0.131px;">Cancelled</span>
<span class="t" style="left:657.00px;top:687.00px;font-size:12.94px;color:#555;-webkit-text-stroke:0.2px #555;letter-spacing:0.425px;">04 April 2025</span>
<span class="t" style="left:839.50px;top:687.00px;font-size:12.94px;color:#555;-webkit-text-stroke:0.2px #555;letter-spacing:0.450px;">25.96</span>
<span class="t" style="left:1192.30px;top:687.00px;font-size:12.94px;color:#555;-webkit-text-stroke:0.2px #555;letter-spacing:0.400px;">25.96</span>
<span class="t" style="left:986.83px;top:687.00px;font-size:12.94px;color:#555;">-</span>
<span class="t" style="left:1114.12px;top:687.00px;font-size:12.94px;color:#555;">-</span>
<span class="t" style="left:1332.20px;top:687.00px;font-size:10.9px;color:#fff;font-weight:700;-webkit-text-stroke:0.1px #263f97;letter-spacing:0.383px;">View</span>
<span class="t" style="left:159.90px;top:746.00px;font-size:12.94px;color:#555;-webkit-text-stroke:0.2px #555;letter-spacing:-0.044px;">CNUP249GB</span>
<span class="t" style="left:276.85px;top:746.00px;font-size:12.94px;color:#263f97;font-weight:700;letter-spacing:-0.431px;">SHCP1111185973</span>
<span class="t" style="left:401.25px;top:746.00px;font-size:12.94px;color:#555;-webkit-text-stroke:0.2px #555;letter-spacing:0.562px;">Ekart</span>
<span class="t" style="left:530.90px;top:745.00px;font-size:11.63px;color:#fff;font-weight:700;-webkit-text-stroke:0.1px #c8181a;letter-spacing:-0.131px;">Cancelled</span>
<span class="t" style="left:657.00px;top:746.00px;font-size:12.94px;color:#555;-webkit-text-stroke:0.2px #555;letter-spacing:0.425px;">04 April 2025</span>
<span class="t" style="left:839.50px;top:746.00px;font-size:12.94px;color:#555;-webkit-text-stroke:0.2px #555;letter-spacing:0.450px;">25.96</span>
<span class="t" style="left:1192.30px;top:746.00px;font-size:12.94px;color:#555;-webkit-text-stroke:0.2px #555;letter-spacing:0.400px;">25.96</span>
<span class="t" style="left:986.83px;top:746.00px;font-size:12.94px;color:#555;">-</span>
<span class="t" style="left:1114.12px;top:746.00px;font-size:12.94px;color:#555;">-</span>
<span class="t" style="left:1332.20px;top:746.00px;font-size:10.9px;color:#fff;font-weight:700;-webkit-text-stroke:0.1px #263f97;letter-spacing:0.383px;">View</span>
<span class="t" style="left:159.90px;top:805.00px;font-size:12.94px;color:#555;-webkit-text-stroke:0.2px #555;letter-spacing:-0.044px;">CNUP249GB</span>
<span class="t" style="left:276.85px;top:805.00px;font-size:12.94px;color:#263f97;font-weight:700;letter-spacing:-0.431px;">SHCP1111185973</span>
<span class="t" style="left:401.25px;top:805.00px;font-size:12.94px;color:#555;-webkit-text-stroke:0.2px #555;letter-spacing:0.562px;">Ekart</span>
<span class="t" style="left:530.90px;top:804.00px;font-size:11.63px;color:#fff;font-weight:700;-webkit-text-stroke:0.1px #c8181a;letter-spacing:-0.131px;">Cancelled</span>
<span class="t" style="left:657.00px;top:805.00px;font-size:12.94px;color:#555;-webkit-text-stroke:0.2px #555;letter-spacing:0.425px;">04 April 2025</span>
<span class="t" style="left:839.50px;top:805.00px;font-size:12.94px;color:#555;-webkit-text-stroke:0.2px #555;letter-spacing:0.450px;">25.96</span>
<span class="t" style="left:1192.30px;top:805.00px;font-size:12.94px;color:#555;-webkit-text-stroke:0.2px #555;letter-spacing:0.400px;">25.96</span>
<span class="t" style="left:986.83px;top:805.00px;font-size:12.94px;color:#555;">-</span>
<span class="t" style="left:1114.12px;top:805.00px;font-size:12.94px;color:#555;">-</span>
<span class="t" style="left:1332.20px;top:805.00px;font-size:10.9px;color:#fff;font-weight:700;-webkit-text-stroke:0.1px #263f97;letter-spacing:0.383px;">View</span>
<span class="t" style="left:159.90px;top:864.00px;font-size:12.94px;color:#555;-webkit-text-stroke:0.2px #555;letter-spacing:-0.044px;">CNUP249GB</span>
<span class="t" style="left:276.85px;top:864.00px;font-size:12.94px;color:#263f97;font-weight:700;letter-spacing:-0.431px;">SHCP1111185973</span>
<span class="t" style="left:401.25px;top:864.00px;font-size:12.94px;color:#555;-webkit-text-stroke:0.2px #555;letter-spacing:0.562px;">Ekart</span>
<span class="t" style="left:530.90px;top:863.00px;font-size:11.63px;color:#fff;font-weight:700;-webkit-text-stroke:0.1px #c8181a;letter-spacing:-0.131px;">Cancelled</span>
<span class="t" style="left:657.00px;top:864.00px;font-size:12.94px;color:#555;-webkit-text-stroke:0.2px #555;letter-spacing:0.425px;">04 April 2025</span>
<span class="t" style="left:839.50px;top:864.00px;font-size:12.94px;color:#555;-webkit-text-stroke:0.2px #555;letter-spacing:0.450px;">25.96</span>
<span class="t" style="left:1192.30px;top:864.00px;font-size:12.94px;color:#555;-webkit-text-stroke:0.2px #555;letter-spacing:0.400px;">25.96</span>
<span class="t" style="left:986.83px;top:864.00px;font-size:12.94px;color:#555;">-</span>
<span class="t" style="left:1114.12px;top:864.00px;font-size:12.94px;color:#555;">-</span>
<span class="t" style="left:1332.20px;top:864.00px;font-size:10.9px;color:#fff;font-weight:700;-webkit-text-stroke:0.1px #263f97;letter-spacing:0.383px;">View</span>
<span class="t" style="left:159.90px;top:923.00px;font-size:12.94px;color:#555;-webkit-text-stroke:0.2px #555;letter-spacing:-0.044px;">CNUP249GB</span>
<span class="t" style="left:276.85px;top:923.00px;font-size:12.94px;color:#263f97;font-weight:700;letter-spacing:-0.431px;">SHCP1111185973</span>
<span class="t" style="left:401.25px;top:923.00px;font-size:12.94px;color:#555;-webkit-text-stroke:0.2px #555;letter-spacing:0.562px;">Ekart</span>
<span class="t" style="left:530.90px;top:922.00px;font-size:11.63px;color:#fff;font-weight:700;-webkit-text-stroke:0.1px #c8181a;letter-spacing:-0.131px;">Cancelled</span>
<span class="t" style="left:657.00px;top:923.00px;font-size:12.94px;color:#555;-webkit-text-stroke:0.2px #555;letter-spacing:0.425px;">04 April 2025</span>
<span class="t" style="left:839.50px;top:923.00px;font-size:12.94px;color:#555;-webkit-text-stroke:0.2px #555;letter-spacing:0.450px;">25.96</span>
<span class="t" style="left:1192.30px;top:923.00px;font-size:12.94px;color:#555;-webkit-text-stroke:0.2px #555;letter-spacing:0.400px;">25.96</span>
<span class="t" style="left:986.83px;top:923.00px;font-size:12.94px;color:#555;">-</span>
<span class="t" style="left:1114.12px;top:923.00px;font-size:12.94px;color:#555;">-</span>
<span class="t" style="left:1332.20px;top:923.00px;font-size:10.9px;color:#fff;font-weight:700;-webkit-text-stroke:0.1px #263f97;letter-spacing:0.383px;">View</span>
<span class="t" style="left:159.90px;top:982.00px;font-size:12.94px;color:#555;-webkit-text-stroke:0.2px #555;letter-spacing:-0.044px;">CNUP249GB</span>
<span class="t" style="left:276.85px;top:982.00px;font-size:12.94px;color:#263f97;font-weight:700;letter-spacing:-0.431px;">SHCP1111185973</span>
<span class="t" style="left:401.25px;top:982.00px;font-size:12.94px;color:#555;-webkit-text-stroke:0.2px #555;letter-spacing:0.562px;">Ekart</span>
<span class="t" style="left:530.90px;top:981.00px;font-size:11.63px;color:#fff;font-weight:700;-webkit-text-stroke:0.1px #c8181a;letter-spacing:-0.131px;">Cancelled</span>
<span class="t" style="left:657.00px;top:982.00px;font-size:12.94px;color:#555;-webkit-text-stroke:0.2px #555;letter-spacing:0.425px;">04 April 2025</span>
<span class="t" style="left:839.50px;top:982.00px;font-size:12.94px;color:#555;-webkit-text-stroke:0.2px #555;letter-spacing:0.450px;">25.96</span>
<span class="t" style="left:1192.30px;top:982.00px;font-size:12.94px;color:#555;-webkit-text-stroke:0.2px #555;letter-spacing:0.400px;">25.96</span>
<span class="t" style="left:986.83px;top:982.00px;font-size:12.94px;color:#555;">-</span>
<span class="t" style="left:1114.12px;top:982.00px;font-size:12.94px;color:#555;">-</span>
<span class="t" style="left:1332.20px;top:982.00px;font-size:10.9px;color:#fff;font-weight:700;-webkit-text-stroke:0.1px #263f97;letter-spacing:0.383px;">View</span>
<span class="t" style="left:450.25px;top:1073.00px;font-size:15.12px;color:#263f97;-webkit-text-stroke:0.35px #263f97;letter-spacing:-0.104px;">Rows per page</span>
<span class="t" style="left:575.65px;top:1074.00px;font-size:14.83px;color:#263f97;-webkit-text-stroke:0.35px #263f97;">5</span>
<span class="t" style="left:704.55px;top:1073.00px;font-size:15.12px;color:#263f97;-webkit-text-stroke:0.35px #263f97;letter-spacing:-0.043px;">Previous</span>
<span class="t" style="left:793.62px;top:1074.00px;font-size:14.83px;color:#fff;font-weight:700;">1</span>
<span class="t" style="left:830.33px;top:1074.00px;font-size:14.83px;color:#263f97;font-weight:700;">2</span>
<span class="t" style="left:867.45px;top:1074.00px;font-size:14.83px;color:#263f97;font-weight:700;">3</span>
<span class="t" style="left:904.10px;top:1074.00px;font-size:14.83px;color:#263f97;font-weight:700;">4</span>
<span class="t" style="left:941.25px;top:1073.00px;font-size:15.12px;color:#263f97;-webkit-text-stroke:0.35px #263f97;letter-spacing:0.217px;">Next</span>
<span class="t" style="left:1073.65px;top:20.00px;font-size:10.9px;color:#2b3a4a;font-weight:700;letter-spacing:-0.444px;">Shipclues</span>
<span class="t" style="left:1262.82px;top:31.00px;font-size:13.2px;color:#9a9a9a;font-family:'DejaVu Sans', 'Liberation Sans', sans-serif;-webkit-text-stroke:0.4px #9a9a9a;transform:scaleX(1.043);transform-origin:0 0;">₹</span>
<span class="t" style="left:1270.75px;top:31.00px;font-size:13.95px;color:#999;-webkit-text-stroke:0.45px #999;letter-spacing:0.783px;">2024</span>
</div></body></html>
